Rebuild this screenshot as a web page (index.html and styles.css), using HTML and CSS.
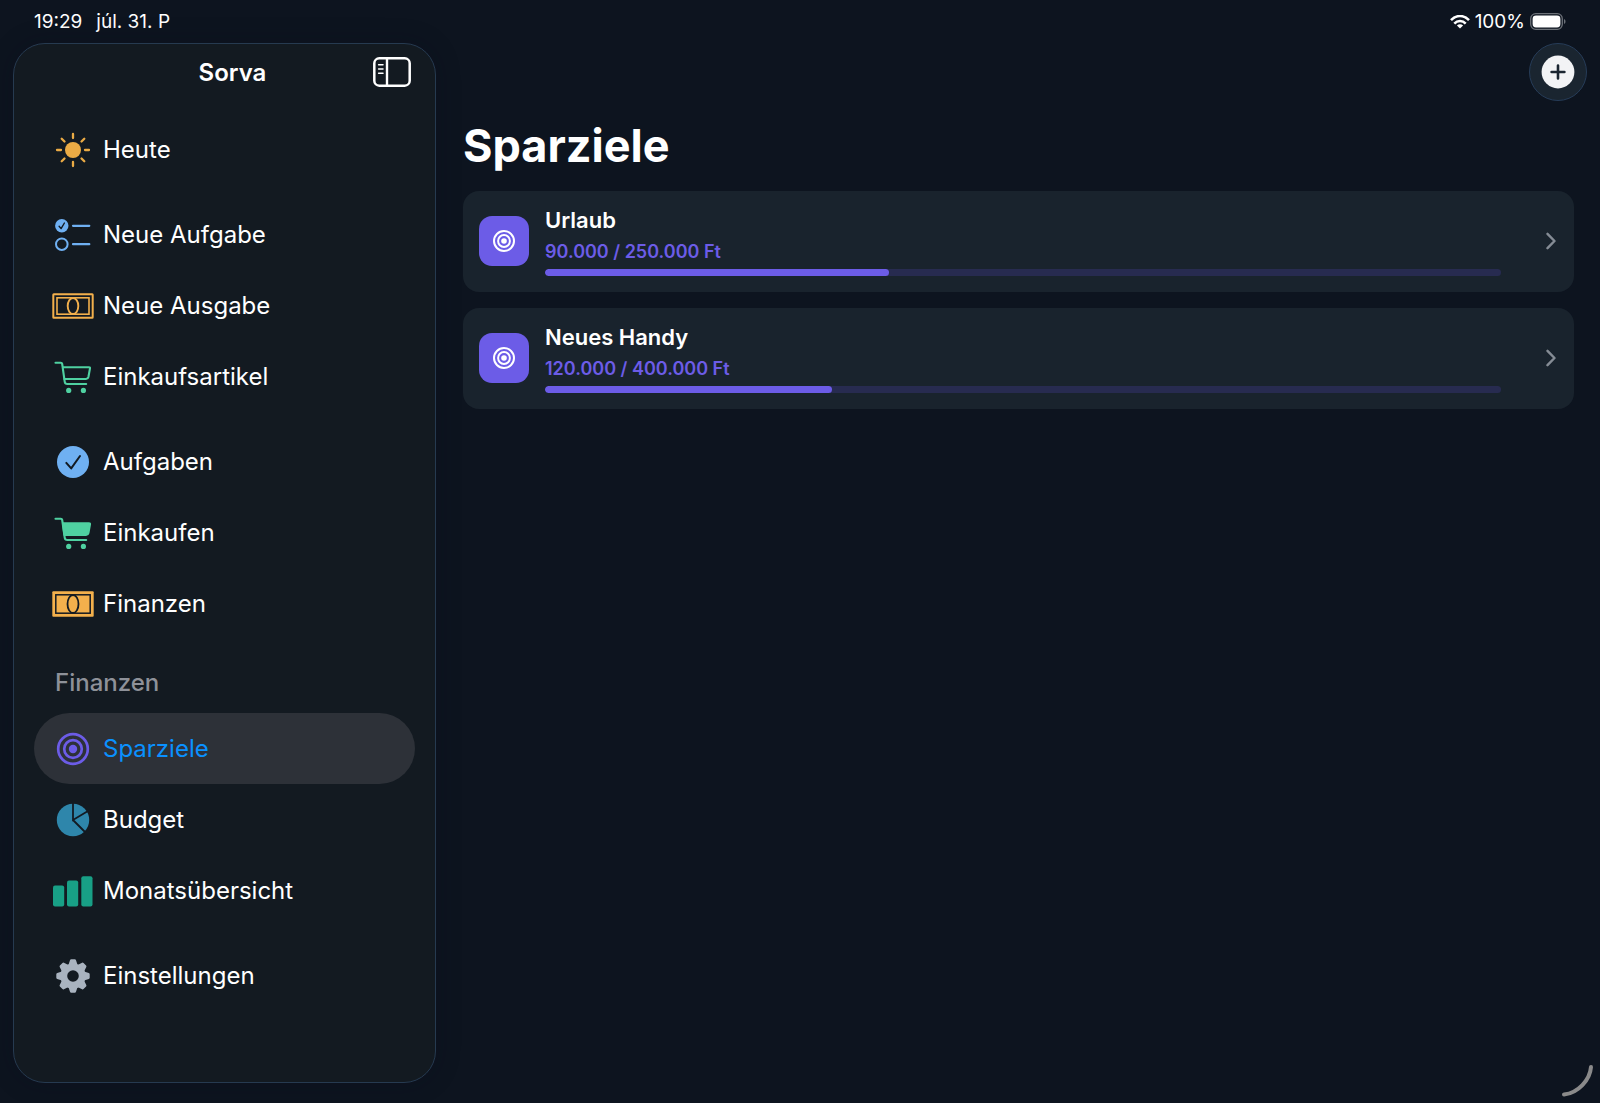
FILE: index.html
```html
<!DOCTYPE html>
<html lang="de">

<head>
    <meta charset="UTF-8">
    <meta name="viewport" content="width=device-width, initial-scale=1.0">
    <title>Sorva</title>
    <link rel="stylesheet" href="styles.css">
</head>

<body>
    <div class="status-bar">
        <div class="status-left">
            <span>19:29</span>
            <span>júl. 31. P</span>
        </div>
        <div class="status-right">
            <svg width="20" height="14" viewBox="0 0 20 14" fill="none" stroke="#fff" stroke-width="2.5">
                <path d="M1 5.2C6-0.4 14-0.4 19 5.2" />
                <path d="M4.3 8.6C7.5 5 12.5 5 15.7 8.6" />
                <path d="M10 13.6L6.9 10.5C8.7 8.8 11.3 8.8 13.1 10.5Z" fill="#fff" stroke="none" />
            </svg>
            <span>100%</span>
            <svg width="36" height="17" viewBox="0 0 36 17">
                <rect x="0.7" y="0.7" width="31.6" height="15.6" rx="5" fill="none" stroke="#6c7178" stroke-width="1.3" />
                <rect x="2.6" y="2.6" width="27.8" height="11.8" rx="3.4" fill="#fff" />
                <path d="M34 6C36 6.8 36 10.2 34 11Z" fill="#6c7178" />
            </svg>
        </div>
    </div>

    <div class="app">
        <aside class="sidebar">
            <div class="sidebar-header">
                <p class="app-name">Sorva</p>
                <button class="toggle" type="button" aria-label="Seitenleiste">
                    <svg width="38" height="30" viewBox="0 0 38 30" fill="none" stroke="#fff" stroke-linecap="round">
                        <rect x="1.3" y="1.3" width="35.4" height="27.4" rx="5" stroke-width="2.5" />
                        <path d="M14 2V28" stroke-width="2.4" stroke-linecap="butt" />
                        <path d="M5.6 7.8H10M5.6 12H10M5.6 16.2H10" stroke-width="1.5" />
                    </svg>
                </button>
            </div>

            <nav class="menu">
                <div class="menu-group">
                    <a class="menu-item" href="#">
                        <svg class="icon sun" viewBox="-21 -18 42 36">
                            <circle r="8" fill="currentColor" />
                            <path d="M0-12V-16M0 12V16M-12 0H-16M12 0H16M-8.5-8.5L-11.3-11.3M8.5-8.5L11.3-11.3M-8.5 8.5L-11.3 11.3M8.5 8.5L11.3 11.3" stroke="currentColor" stroke-width="2.3" stroke-linecap="round" />
                        </svg>
                        Heute
                    </a>
                </div>

                <div class="menu-group">
                    <a class="menu-item" href="#">
                        <svg class="icon blue" viewBox="-21 -18 42 36" fill="none" stroke="currentColor" stroke-width="2.2" stroke-linecap="round">
                            <circle cx="-11.2" cy="-9.2" r="6.7" fill="currentColor" stroke="none" />
                            <path d="M-13.9-8.8L-11.9-6.4L-8.6-12" stroke="#131a22" stroke-width="1.4" stroke-linejoin="round" />
                            <circle cx="-11.2" cy="9.2" r="5.8" stroke-width="2" />
                            <path d="M0-9.2H16.3M0 9.2H16.3" />
                        </svg>
                        Neue Aufgabe
                    </a>
                    <a class="menu-item" href="#">
                        <svg class="icon orange" viewBox="-21 -18 42 36" fill="none" stroke="currentColor">
                            <rect x="-19.7" y="-11.8" width="39.4" height="23.6" rx="0.5" stroke-width="2" />
                            <rect x="-16" y="-8.2" width="32" height="16.4" stroke-width="1.6" />
                            <ellipse rx="5.3" ry="8" stroke-width="1.9" />
                        </svg>
                        Neue Ausgabe
                    </a>
                    <a class="menu-item" href="#">
                        <svg class="icon green" viewBox="-21 -18 42 36" fill="none" stroke="currentColor" stroke-width="2.1" stroke-linecap="round" stroke-linejoin="round">
                            <path d="M-17.5-14.3H-12.2Q-11-14.3-10.8-13L-8.3 4.6Q-8 7-5.6 7H13.2" />
                            <path d="M-10-9.8H16Q17.2-9.8 17-8.6L15.4 0Q15 1.9 13 2H-8.6" />
                            <circle cx="-4.3" cy="13.4" r="2.6" fill="currentColor" stroke="none" />
                            <circle cx="10.4" cy="13.4" r="2.6" fill="currentColor" stroke="none" />
                        </svg>
                        Einkaufsartikel
                    </a>
                </div>

                <div class="menu-group">
                    <a class="menu-item" href="#">
                        <svg class="icon blue" viewBox="-21 -18 42 36">
                            <circle r="16" fill="currentColor" />
                            <path d="M-6.7 0.9L-1.8 6.4L7-6" fill="none" stroke="#131a22" stroke-width="2" stroke-linecap="round" stroke-linejoin="round" />
                        </svg>
                        Aufgaben
                    </a>
                    <a class="menu-item" href="#">
                        <svg class="icon green" viewBox="-21 -18 42 36" fill="none" stroke="currentColor" stroke-width="2.1" stroke-linecap="round" stroke-linejoin="round">
                            <path d="M-17.5-14.3H-12.2Q-11-14.3-10.8-13L-8.3 4.6Q-8 7-5.6 7H13.2" />
                            <path d="M-10-9.8H16Q17.2-9.8 17-8.6L15.4 0Q15 1.9 13 2H-8.6Z" fill="currentColor" />
                            <circle cx="-4.3" cy="13.4" r="2.6" fill="currentColor" stroke="none" />
                            <circle cx="10.4" cy="13.4" r="2.6" fill="currentColor" stroke="none" />
                        </svg>
                        Einkaufen
                    </a>
                    <a class="menu-item" href="#">
                        <svg class="icon orange" viewBox="-21 -18 42 36" fill="none" stroke="#131a22">
                            <rect x="-20.7" y="-12.8" width="41.4" height="25.6" rx="1" fill="currentColor" stroke="none" />
                            <rect x="-17.2" y="-9.2" width="34.4" height="18.4" stroke-width="1.5" />
                            <ellipse rx="5.5" ry="9" stroke-width="1.8" />
                        </svg>
                        Finanzen
                    </a>
                </div>

                <div class="menu-section">
                    <h2 class="menu-title">Finanzen</h2>
                    <a class="menu-item active" href="#" aria-current="page">
                        <svg class="icon purple" viewBox="-21 -18 42 36" fill="none" stroke="currentColor" stroke-width="2.7">
                            <circle r="14.8" />
                            <circle r="8.8" />
                            <circle r="4.2" fill="currentColor" stroke="none" />
                        </svg>
                        Sparziele
                    </a>
                    <a class="menu-item" href="#">
                        <svg class="icon teal" viewBox="-21 -18 42 36">
                            <circle r="16.2" fill="currentColor" />
                            <path d="M0-17V0L15-9M0 0L12.5 12.5" fill="none" stroke="#131a22" stroke-width="1.8" />
                        </svg>
                        Budget
                    </a>
                    <a class="menu-item" href="#">
                        <svg class="icon emerald" viewBox="-21 -18 42 36" fill="currentColor">
                            <rect x="-20" y="-5.6" width="11.2" height="21" rx="2" />
                            <rect x="-6" y="-10.4" width="11.2" height="25.8" rx="2" />
                            <rect x="8.3" y="-14.8" width="11.2" height="30.2" rx="2" />
                        </svg>
                        Monatsübersicht
                    </a>
                </div>

                <div class="menu-group">
                    <a class="menu-item" href="#">
                        <svg class="icon gray" viewBox="-21 -18 42 36" fill="currentColor">
                            <defs>
                                <path id="tooth" d="M-4.6-11L-3-15.8Q-2.7-16.7-1.8-16.7H1.8Q2.7-16.7 3-15.8L4.6-11Z" />
                            </defs>
                            <circle r="9.2" fill="none" stroke="currentColor" stroke-width="6.8" />
                            <use href="#tooth" />
                            <use href="#tooth" transform="rotate(45)" />
                            <use href="#tooth" transform="rotate(90)" />
                            <use href="#tooth" transform="rotate(135)" />
                            <use href="#tooth" transform="rotate(180)" />
                            <use href="#tooth" transform="rotate(225)" />
                            <use href="#tooth" transform="rotate(270)" />
                            <use href="#tooth" transform="rotate(315)" />
                        </svg>
                        Einstellungen
                    </a>
                </div>
            </nav>
        </aside>

        <main class="content">
            <div class="toolbar">
                <button class="add-button" type="button" aria-label="Neues Sparziel">
                    <svg width="34" height="34" viewBox="-17 -17 34 34">
                        <circle r="16.4" fill="#f2f3f5" />
                        <path d="M-6.4 0H6.4M0-6.4V6.4" stroke="#1a2530" stroke-width="2.6" stroke-linecap="round" />
                    </svg>
                </button>
            </div>

            <h1>Sparziele</h1>

            <div class="goals">
                <a class="goal" href="#">
                    <div class="goal-icon">
                        <svg width="22" height="22" viewBox="-11 -11 22 22" fill="none" stroke="#fff" stroke-width="2">
                            <circle r="10" />
                            <circle r="5.9" />
                            <circle r="2.8" fill="#fff" stroke="none" />
                        </svg>
                    </div>
                    <div class="goal-info">
                        <p class="goal-name">Urlaub</p>
                        <p class="goal-amount">90.000 / 250.000 Ft</p>
                        <div class="progress">
                            <div class="progress-fill" style="width: 36%"></div>
                        </div>
                    </div>
                    <svg class="chevron" width="10" height="18" viewBox="0 0 10 18">
                        <path d="M1.5 1.8L8.5 9L1.5 16.2" />
                    </svg>
                </a>
                <a class="goal" href="#">
                    <div class="goal-icon">
                        <svg width="22" height="22" viewBox="-11 -11 22 22" fill="none" stroke="#fff" stroke-width="2">
                            <circle r="10" />
                            <circle r="5.9" />
                            <circle r="2.8" fill="#fff" stroke="none" />
                        </svg>
                    </div>
                    <div class="goal-info">
                        <p class="goal-name">Neues Handy</p>
                        <p class="goal-amount">120.000 / 400.000 Ft</p>
                        <div class="progress">
                            <div class="progress-fill" style="width: 30%"></div>
                        </div>
                    </div>
                    <svg class="chevron" width="10" height="18" viewBox="0 0 10 18">
                        <path d="M1.5 1.8L8.5 9L1.5 16.2" />
                    </svg>
                </a>
            </div>
        </main>
    </div>

    <svg class="resize-handle" width="34" height="34" viewBox="0 0 34 34">
        <path d="M30 3C29 16 17 29 3 30.5" />
    </svg>
</body>

</html>
```
FILE: styles.css
```css
* {
    box-sizing: border-box;
}

body {
    background-color: #0d141f;
    color: #fff;
    font-family: Inter, "Liberation Sans", sans-serif;
    margin: 0;
    min-height: 100vh;
    display: flex;
    flex-direction: column;
}

h1,
h2,
p {
    margin: 0;
}

a {
    color: inherit;
    text-decoration: none;
}

button {
    border: 0;
    padding: 0;
    background: none;
    cursor: pointer;
}

svg {
    display: block;
    flex-shrink: 0;
}

/* Status bar */

.status-bar {
    height: 43px;
    padding: 0 34px;
    display: flex;
    align-items: center;
    justify-content: space-between;
    font-size: 19px;
    font-weight: 400;
}

.status-left {
    display: flex;
    gap: 14px;
}

.status-right {
    display: flex;
    align-items: center;
    gap: 5px;
}

/* Layout */

.app {
    flex: 1;
    display: flex;
}

.sidebar {
    width: 423px;
    flex-shrink: 0;
    margin: 0 0 20px 13px;
    padding: 0 20px;
    background-color: #131a21;
    border: 1px solid #263a50;
    border-radius: 32px;
    box-shadow: 0 0 24px rgba(10, 14, 30, 0.3);
}

.sidebar-header {
    height: 56px;
    padding: 0 4px 0 20px;
    display: grid;
    grid-template-columns: 1fr auto 1fr;
    align-items: center;
}

.app-name {
    grid-column: 2;
    font-size: 24px;
    font-weight: 600;
}

.toggle {
    justify-self: end;
}

/* Menu */

.menu {
    display: flex;
    flex-direction: column;
    gap: 14px;
    padding: 14px 0;
}

.menu-item {
    height: 71px;
    padding: 0 18px;
    display: flex;
    align-items: center;
    gap: 9px;
    font-size: 24px;
    border-radius: 36px;
}

.menu-item.active {
    background-color: #2d3138;
    color: #0a91ff;
}

.menu-title {
    padding: 14px 21px;
    font-size: 24px;
    line-height: 32px;
    font-weight: 500;
    color: #8e9199;
}

.icon {
    width: 42px;
    height: 36px;
}

.sun {
    color: #ebab45;
}

.blue {
    color: #6fb0f2;
}

.orange {
    color: #f3b04c;
}

.green {
    color: #4fd1a1;
}

.purple {
    color: #6c5ce7;
}

.teal {
    color: #2e86ab;
}

.emerald {
    color: #18a086;
}

.gray {
    color: #a9b3bf;
}

/* Content */

.content {
    flex: 1;
    padding: 0 26px 20px 27px;
}

.toolbar {
    height: 58px;
    margin-right: -13px;
    display: flex;
    justify-content: flex-end;
}

.add-button {
    width: 58px;
    height: 58px;
    display: flex;
    align-items: center;
    justify-content: center;
    background-color: #1a2530;
    border: 1px solid #263c58;
    border-radius: 50%;
}

h1 {
    margin: 14px 0;
    font-size: 45px;
    line-height: 62px;
    font-weight: 700;
}

.goals {
    display: flex;
    flex-direction: column;
    gap: 16px;
}

.goal {
    padding: 15px 18px 16px 16px;
    display: flex;
    align-items: center;
    gap: 16px;
    background-color: #19232d;
    border-radius: 16px;
}

.goal-icon {
    width: 50px;
    height: 50px;
    display: flex;
    align-items: center;
    justify-content: center;
    background-color: #6c5ce7;
    border-radius: 13px;
}

.goal-info {
    flex: 1;
    margin-right: 29px;
}

.goal-name {
    font-size: 22px;
    line-height: 28px;
    font-weight: 600;
}

.goal-amount {
    margin: 5px 0 4px;
    font-size: 18px;
    line-height: 26px;
    font-weight: 600;
    color: #6c5ce7;
}

.progress {
    height: 7px;
    background-color: #272b50;
    border-radius: 4px;
    overflow: hidden;
}

.progress-fill {
    height: 100%;
    background-color: #6c5ce7;
    border-radius: 4px;
}

.chevron {
    fill: none;
    stroke: #858c95;
    stroke-width: 2.4;
    stroke-linecap: round;
    stroke-linejoin: round;
}

/* Window corner */

.resize-handle {
    position: absolute;
    right: 5px;
    bottom: 5px;
    fill: none;
    stroke: #8a8a8a;
    stroke-width: 4;
    stroke-linecap: round;
}
```
